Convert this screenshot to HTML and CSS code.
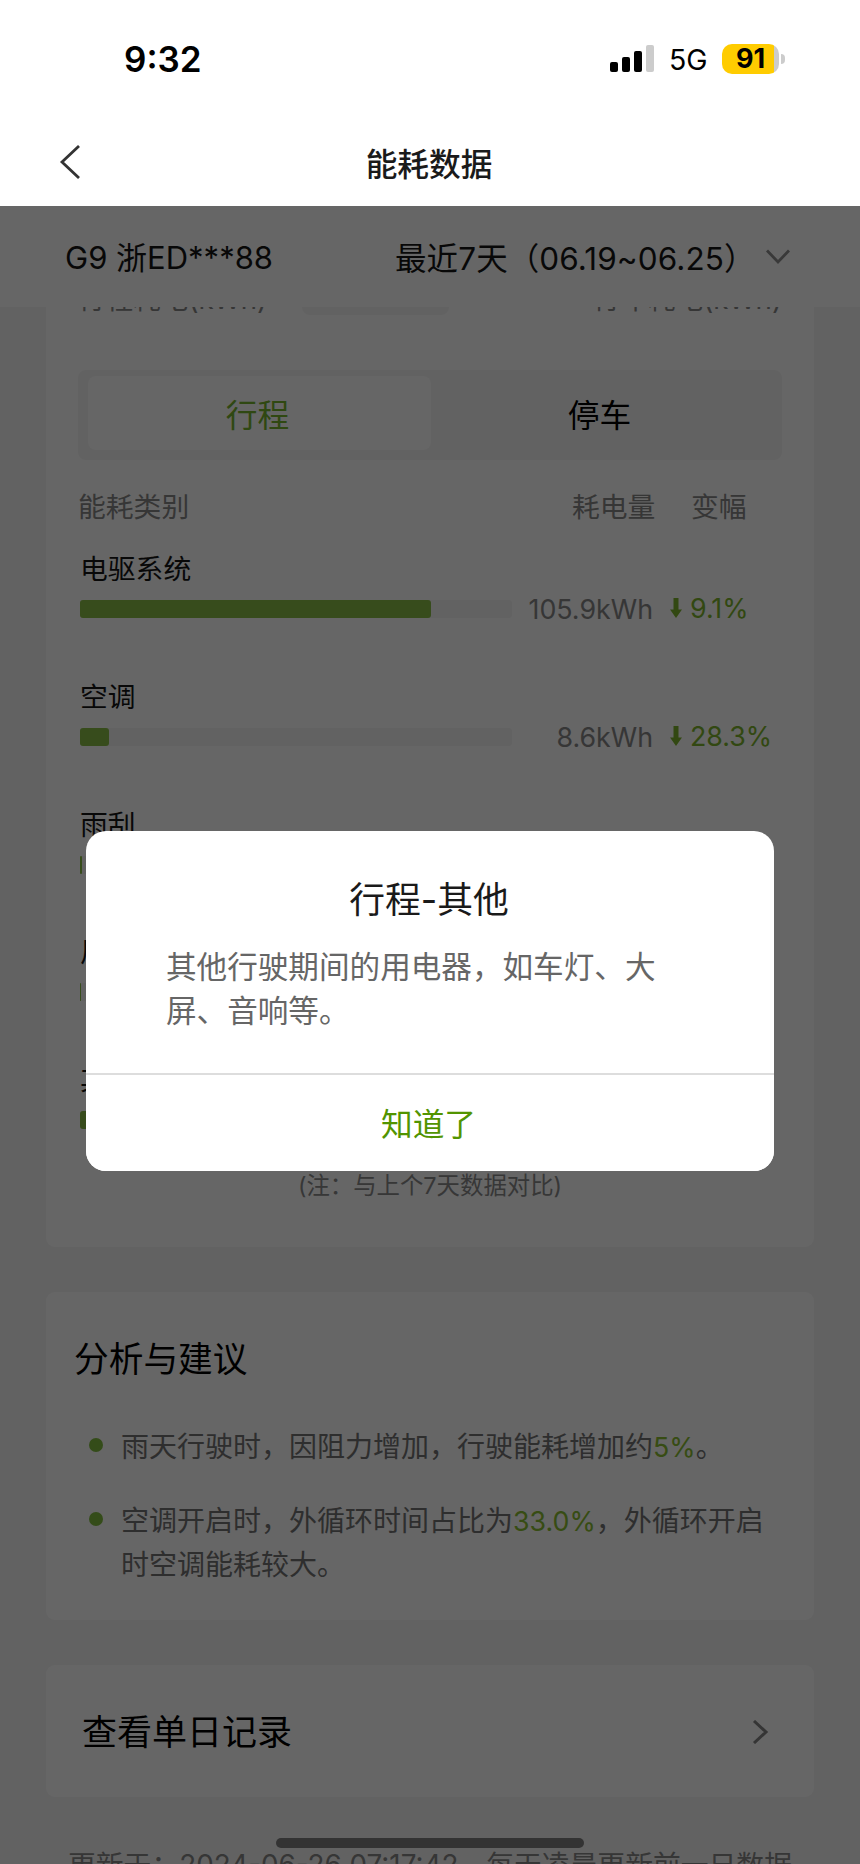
FILE: index.html
```html
<!DOCTYPE html>
<html lang="zh-CN">
<head>
<meta charset="utf-8">
<title>能耗数据</title>
<link rel="stylesheet" href="styles.css">
</head>
<body>
<div class="phone">
  <header class="top">
    <div class="status">
      <span class="clock">9:32</span>
      <div class="indicators">
        <svg class="signal" width="44" height="27" viewBox="0 0 44 27"><rect y="17" width="8" height="10" rx="2"/><rect x="12" y="12" width="8" height="15" rx="2"/><rect x="24" y="6" width="8" height="21" rx="2"/><rect x="36" width="8" height="27" rx="2" fill="#ccc"/></svg>
        <span class="network">5G</span>
        <div class="battery"><span class="level">91</span></div>
        <span class="nub"></span>
      </div>
    </div>
    <div class="nav">
      <svg class="back" width="22" height="34" viewBox="0 0 22 34"><path d="M20 1 3 17 20 33" fill="none" stroke="#333" stroke-width="2.8"/></svg>
      <h1 class="title">能耗数据</h1>
    </div>
  </header>

  <main class="page">
    <div class="filter">
      <span class="car">G9 浙ED***88</span>
      <span class="range">最近7天（06.19~06.25）</span>
      <svg class="down" width="24" height="16" viewBox="0 0 24 16"><path d="M1 1.5 12 13 23 1.5" fill="none" stroke="#8e8e8e" stroke-width="2.8"/></svg>
    </div>
    <div class="scroll">
      <section class="card usage">
        <div class="totals"><span class="trip">行程耗电(kWh)</span><i class="pill"></i><span class="drive">行车耗电(kWh)</span></div>
        <div class="tabs"><span class="tab active">行程</span><span class="tab">停车</span></div>
        <div class="columns"><span class="kind">能耗类别</span><span class="amount">耗电量</span><span class="change">变幅</span></div>
        <div class="item">
          <div class="name">电驱系统</div>
          <div class="data"><div class="track"><div class="fill" style="width:351px"></div></div><span class="kwh">105.9kWh</span><svg class="arrow" width="12" height="20" viewBox="0 0 12 20"><path d="M3.5 0h5v11.500H12L6 20l-6-8.500h3.500z"/></svg><span class="pct">9.1%</span></div>
        </div>
        <div class="item">
          <div class="name">空调</div>
          <div class="data"><div class="track"><div class="fill" style="width:29px"></div></div><span class="kwh">8.6kWh</span><svg class="arrow" width="12" height="20" viewBox="0 0 12 20"><path d="M3.5 0h5v11.500H12L6 20l-6-8.500h3.500z"/></svg><span class="pct">28.3%</span></div>
        </div>
        <div class="item">
          <div class="name">雨刮</div>
          <div class="data"><div class="track"><div class="fill" style="width:2px"></div></div></div>
        </div>
        <div class="item">
          <div class="name">风扇</div>
          <div class="data"><div class="track"><div class="fill" style="width:1px"></div></div></div>
        </div>
        <div class="item">
          <div class="name">其他</div>
          <div class="data"><div class="track"><div class="fill" style="width:24px"></div></div></div>
        </div>
        <p class="note">(注：与上个7天数据对比)</p>
      </section>
      <section class="card advice">
        <h2 class="heading">分析与建议</h2>
        <ul class="tips">
          <li class="tip"><span>雨天行驶时，因阻力增加，行驶能耗增加约<em class="hl">5%</em>。</span></li>
          <li class="tip"><span>空调开启时，外循环时间占比为<em class="hl">33.0%</em>，外循环开启<br>时空调能耗较大。</span></li>
        </ul>
      </section>
      <section class="card daily">
        <span class="link">查看单日记录</span>
        <svg class="go" width="17" height="24" viewBox="0 0 17 24"><path d="M2 1 14 12 2 23" fill="none" stroke="#858585" stroke-width="3"/></svg>
      </section>
      <p class="updated">更新于：2024-06-26 07:17:42，每天凌晨更新前一日数据</p>
    </div>
  </main>

  <div class="scrim">
    <div class="dialog">
      <h3 class="dialog-title">行程-其他</h3>
      <p class="dialog-text">其他行驶期间的用电器，如车灯、大<br>屏、音响等。</p>
      <button class="ok">知道了</button>
    </div>
    <div class="home"></div>
  </div>
</div>
</body>
</html>
```
FILE: styles.css
```css
* { box-sizing: border-box; margin: 0; padding: 0; }
body { font-family: Inter, "Noto Sans CJK SC", sans-serif; font-weight: 400; color: #161616; background: #fff; }
h1, h2, h3 { font-weight: 400; }
.phone { position: relative; width: 860px; height: 1864px; overflow: hidden; white-space: nowrap; display: flex; flex-direction: column; }
.top { height: 206px; flex: none; background: #fff; }
.status { height: 118px; padding: 0 75px 0 124px; display: flex; align-items: center; justify-content: space-between; }
.clock { font-size: 35px; line-height: 40px; font-weight: 600; color: #000; }
.indicators { display: flex; align-items: center; color: #000; }
.signal { margin-right: 15px; margin-bottom: 2px; }
.network { width: 53px; font-size: 28.5px; line-height: 34px; margin-top: 2px; }
.battery { width: 57px; height: 30px; border-radius: 10px; background: linear-gradient(90deg, #fc0 52px, #ccc 52px); text-align: center; margin-bottom: 1px; }
.level { font-size: 27px; line-height: 30px; font-weight: 700; }
.nub { width: 4px; height: 10px; background: #ccc; border-radius: 0 5px 5px 0; margin-left: 2px; }
.nav { height: 88px; padding-left: 59px; display: flex; align-items: center; }
.back { flex: none; }
.title { width: 696px; text-align: center; font-size: 31.7px; font-weight: 500; line-height: 40px; margin-top: 5px; color: #1a1a1a; }
.page { flex: 1; min-height: 0; display: flex; flex-direction: column; background: #f6f6f6; }
.filter { height: 101px; flex: none; background: #fff; display: flex; align-items: center; padding: 0 70px 2px 65px; font-size: 31.5px; }
.car { flex: 1; font-size: 31px; }
.range { width: 371px; letter-spacing: .1px; }
.down { margin-top: 2px; }
.scroll { flex: 1; min-height: 0; overflow: hidden; padding: 0 46px; }
.card { background: #fff; border-radius: 9px; margin-bottom: 45px; }
.usage { height: 940px; padding: 0 32px; border-radius: 0 0 9px 9px; }
.totals { height: 63px; display: flex; font-size: 27.6px; color: #888; }
.trip, .drive { line-height: 40px; margin-top: -28px; }
.trip { width: 224px; }
.pill { width: 147px; height: 8px; margin-right: auto; background: #f6f6f6; border-radius: 0 0 8px 8px; }
.tabs { height: 90px; padding: 6px 10px 10px; border-radius: 8px; background: #f6f6f6; display: grid; grid-template-columns: 343px 341px; font-size: 31.7px; color: #000; }
.tab { border-radius: 8px; display: flex; align-items: center; justify-content: center; padding: 0 4px 1px 0; }
.active { background: #fff; color: #77b32d; }
.columns { height: 92px; padding-bottom: 3px; display: flex; align-items: center; font-size: 27.8px; color: #888; }
.kind { flex: 1; }
.amount { width: 119px; }
.change { width: 91px; }
.item { height: 127.8px; padding: 0 0 0 2px; }
.name { font-size: 27.8px; line-height: 34px; }
.data { height: 34px; margin-top: 6px; display: flex; align-items: center; }
.track { width: 432px; height: 18px; background: #f6f6f6; border-radius: 3px; }
.fill { height: 18px; background: #8abe46; border-radius: 3px; }
.kwh { width: 141px; text-align: right; font-size: 26.8px; color: #888; }
.arrow { margin: 0 8px 2px 17px; fill: #7db52e; }
.pct { font-size: 26.8px; color: #7db52e; margin-bottom: 2px; }
.note { text-align: center; font-size: 23.4px; line-height: 30px; color: #8a8a8a; margin-top: -20px; }
.advice { height: 328px; padding: 43px 28px; }
.heading { font-size: 34.7px; line-height: 48px; color: #000; }
.tips { list-style: none; padding: 42px 0 0 15px; display: grid; gap: 30px; }
.tip { font-size: 28px; line-height: 44px; color: #737373; display: flex; gap: 18px; }
.tip::before { content: ""; width: 14px; height: 14px; flex: none; margin-top: 13px; border-radius: 50%; background: #82bd40; }
.hl { font-style: normal; color: #8abe32; font-size: 26.8px; }
.daily { height: 132px; display: flex; align-items: center; justify-content: space-between; padding: 0 45px 4px 36px; margin-bottom: 48px; }
.link { font-size: 35px; color: #000; }
.go { margin-top: 5px; }
.updated { font-size: 27.8px; line-height: 40px; color: #888; padding-left: 22px; }
.scrim { position: absolute; top: 206px; left: 0; right: 0; bottom: 0; background: rgba(0, 0, 0, .6); padding-top: 625px; }
.dialog { width: 688px; height: 340px; margin: 0 auto; background: #fff; border-radius: 20px; overflow: hidden; display: flex; flex-direction: column; }
.dialog-title { text-align: center; font-size: 35.8px; line-height: 48px; padding: 45px 2px 0 0; color: #1a1a1a; }
.dialog-text { padding: 21px 0 0 80px; flex: 1; font-size: 30.6px; line-height: 44px; color: #666; }
.ok { height: 98px; border: 0; border-top: 2px solid #ddd; padding: 0 3px 2px 0; background: #fff; font: inherit; font-size: 31.7px; color: #529400; }
.home { position: absolute; left: 276px; bottom: 16px; width: 308px; height: 10px; border-radius: 5px; background: #333; }
```
